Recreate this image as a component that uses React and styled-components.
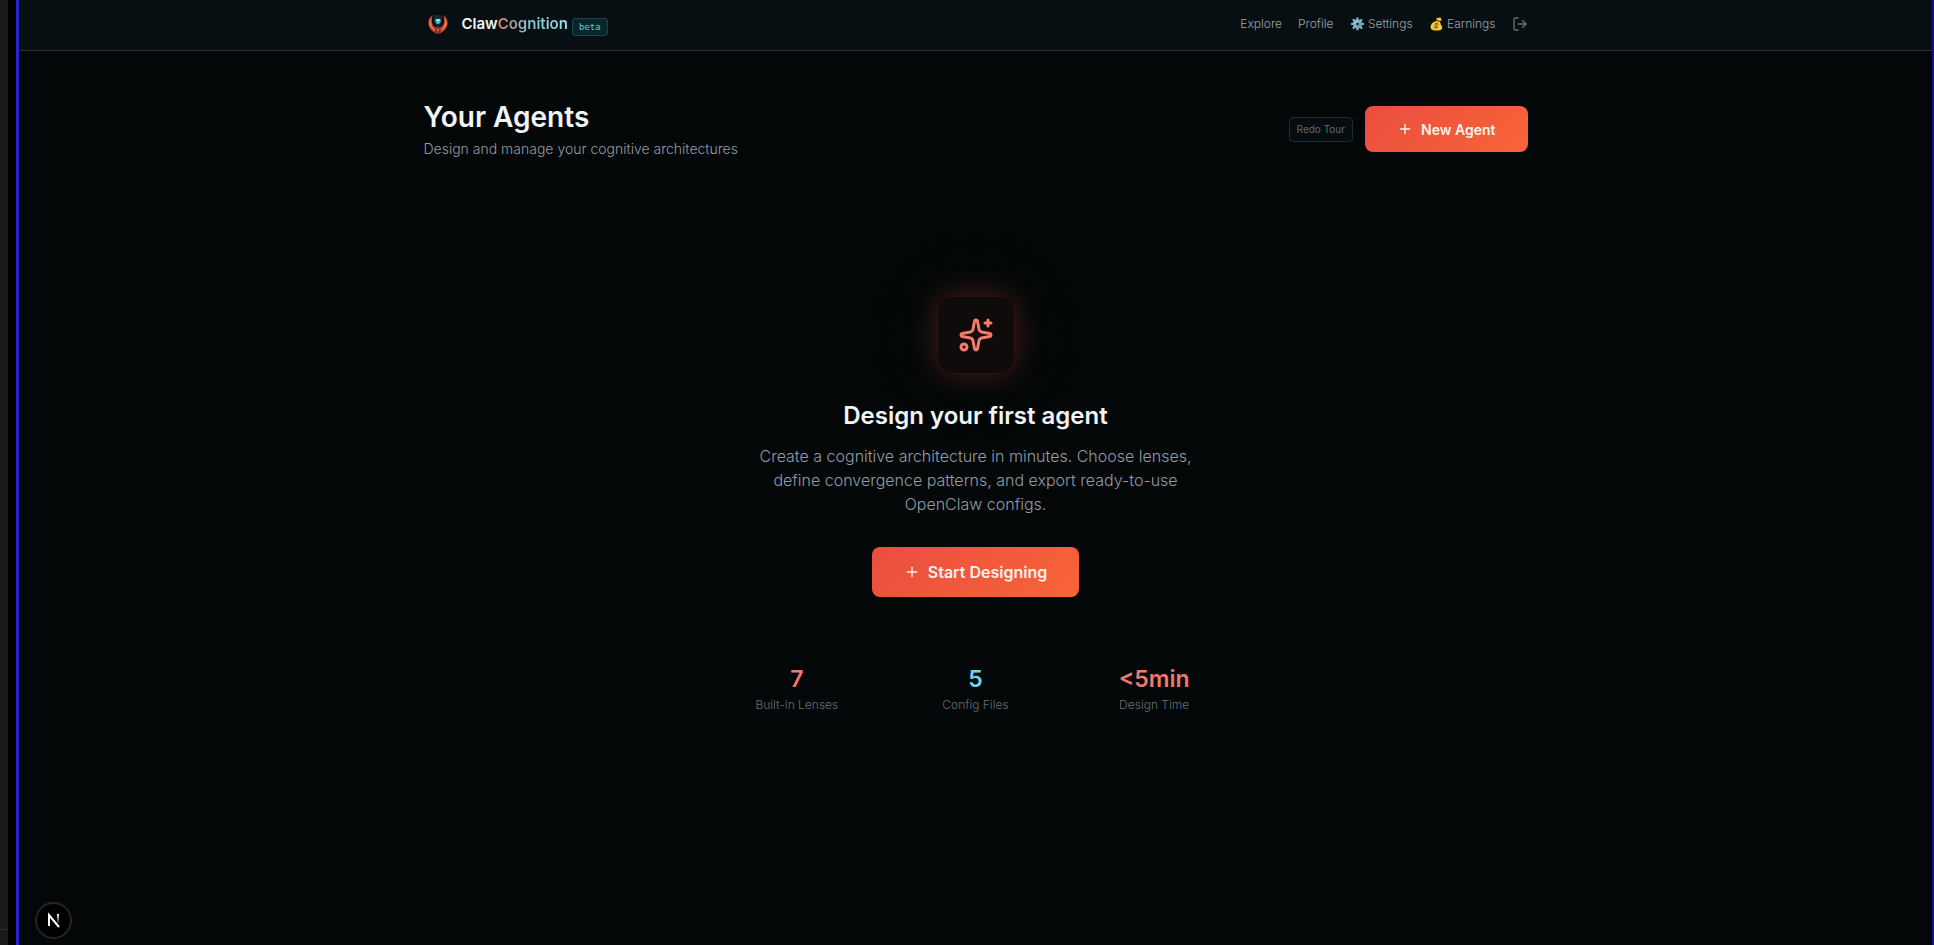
import styled, { createGlobalStyle } from 'styled-components'
import { LogOut, Plus, Sparkles } from 'lucide-react'

const GlobalStyle = createGlobalStyle`
    *{
        box-sizing:border-box;
    }
    body{
        margin:0;
        background-color:#030708;
        color:#f1f5f6;
        font-family:Inter, "Open Sans", sans-serif;
    }
    h1, h2, p, dl, dd{
        margin:0;
    }
`
const Frame = styled.div`
    min-height:100vh;
    display:grid;
    grid-template-columns:8px 1fr;
    column-gap:8px;
    background-color:#000;
`
const Gutter = styled.div`
    background-color:#1a1a1a;
    display:flex;
    flex-direction:column;
    justify-content:flex-end;
`
const GutterFoot = styled.div`
    height:16px;
    border-top:1px solid #2c2c2c;
`
const Page = styled.div`
    background-color:#030708;
    border-left:3px solid #2a22cc;
    border-right:2px solid #16108a;
`
const Header = styled.header`
    height:51px;
    background-color:#080f12;
    border-bottom:1px solid #22343a;
`
const Inner = styled.div`
    max-width:1152px;
    margin:0 auto;
    padding:0 24px;
`
const HeaderRow = styled(Inner)`
    height:48px;
    display:flex;
    align-items:center;
    justify-content:space-between;
`
const Brand = styled.a`
    display:flex;
    align-items:center;
    color:#f1f5f6;
    text-decoration:none;
`
const LogoMark = styled.svg`
    width:28px;
    height:28px;
    margin-right:10px;
`
const BrandName = styled.span`
    font-size:15px;
    line-height:24px;
    font-weight:600;
`
const Gradient = styled.span`
    background:linear-gradient(90deg, #d98078 0%, #7fc3cf 45%, #9ae0ec 100%);
    background-clip:text;
    -webkit-background-clip:text;
    color:transparent;
`
const Beta = styled.span`
    margin-left:4px;
    margin-top:5px;
    padding:0 6px;
    border:1px solid #17464f;
    border-radius:3px;
    background-color:#08252b;
    color:#6cc6d4;
    font-family:"DejaVu Sans Mono", monospace;
    font-size:9px;
    line-height:16px;
`
const Nav = styled.nav`
    display:flex;
    align-items:center;
    gap:16px;
`
const NavLink = styled.a`
    color:#9aa4ac;
    font-size:12px;
    font-weight:300;
    line-height:16px;
    text-decoration:none;
`
const IconButton = styled.button`
    display:flex;
    padding:0;
    border:none;
    background:none;
    color:#66727c;
`
const Main = styled(Inner).attrs({ as: 'main' })`
    padding-top:48px;
`
const TitleRow = styled.div`
    display:flex;
    align-items:center;
    justify-content:space-between;
`
const Title = styled.h1`
    font-size:28px;
    line-height:36px;
    font-weight:600;
    margin-bottom:4px;
`
const Subtitle = styled.p`
    color:#939ca6;
    font-size:14px;
    font-weight:300;
    line-height:20px;
`
const Actions = styled.div`
    display:flex;
    align-items:center;
    gap:12px;
`
const TourButton = styled.button`
    padding:0 7px;
    border:1px solid #1f2c31;
    border-radius:4px;
    background-color:#060d10;
    color:#606a72;
    font-family:inherit;
    font-size:10px;
    line-height:23px;
`
const PrimaryButton = styled.button`
    height:${(props) => (props.$large ? '50px' : '46px')};
    padding:0 32px;
    display:inline-flex;
    align-items:center;
    gap:8px;
    border:none;
    border-radius:8px;
    background:linear-gradient(135deg, #e94e3f, #f96438);
    color:#fdf3ee;
    font-family:inherit;
    font-size:${(props) => (props.$large ? '16px' : '14px')};
    font-weight:600;
`
const Empty = styled.section`
    padding-top:137px;
    display:flex;
    flex-direction:column;
    align-items:center;
    text-align:center;
`
const IconBox = styled.div`
    width:78px;
    height:78px;
    margin-bottom:26px;
    display:flex;
    align-items:center;
    justify-content:center;
    border:1px solid #29120f;
    border-radius:16px;
    background-color:#100b0b;
    color:#f47c6c;
    box-shadow:0 0 30px rgba(232,80,60,0.28), 0 0 80px rgba(110,90,90,0.12);
`
const EmptyTitle = styled.h2`
    font-size:24px;
    line-height:32px;
    font-weight:600;
    margin-bottom:12px;
`
const EmptyText = styled.p`
    max-width:448px;
    margin-bottom:31px;
    color:#939ca6;
    font-size:16px;
    font-weight:300;
    line-height:24px;
`
const Stats = styled.dl`
    width:100%;
    max-width:512px;
    padding-top:66px;
    display:grid;
    grid-template-columns:repeat(3, 1fr);
    gap:24px;
`
const Stat = styled.div`
    display:flex;
    flex-direction:column-reverse;
    gap:2px;
`
const StatValue = styled.dd`
    color:${(props) => props.$color};
    font-size:23px;
    line-height:32px;
    font-weight:600;
`
const StatLabel = styled.dt`
    color:#656f78;
    font-size:12px;
    font-weight:300;
    line-height:16px;
`
const DevBadge = styled.button`
    position:fixed;
    left:35px;
    bottom:6px;
    width:37px;
    height:37px;
    padding:0;
    border:2px solid #242424;
    border-radius:50%;
    background-color:#000;
`

const links = ['Explore', 'Profile', '⚙️ Settings', '💰 Earnings']

const stats = [
    { value: '7', label: 'Built-in Lenses', color: '#ee7a6c' },
    { value: '5', label: 'Config Files', color: '#74d3ec' },
    { value: '<5min', label: 'Design Time', color: '#ee7a6c' },
]

const Logo = () => (
    <LogoMark viewBox="0 0 28 28" aria-hidden="true">
        <path d="M9 5C5 7 3 12 5 16c1 4 5 7 9 8 4-1 8-4 9-8 2-4 0-9-4-11 2 4 2 9-2 12h-6C7 14 7 9 9 5z" fill="#b93c2a" />
        <path d="M8 7c-3 3-4 8-1 11 2 2 4 3 6 4-5-4-7-9-5-15zM20 7c3 3 4 8 1 11-2 2-4 3-6 4 5-4 7-9 5-15z" fill="#ed7449" />
        <path d="M10 6l2-1h4l2 1v6l-3 5h-2l-3-5z" fill="#152a33" />
        <path d="M11 11l1-2h4l1 2-2 3h-2z" fill="#45b9d2" />
        <path d="M12 9h4l-1 2h-2z" fill="#a5e8f1" />
        <path d="M13 17h2l2 4-3 3-3-3z" fill="#7d2622" />
        <path d="M13 20l1-2 1 2-1 2z" fill="#d98a76" />
    </LogoMark>
)

const App = () => {
    return (
        <>
            <GlobalStyle />
            <Frame>
                <Gutter>
                    <GutterFoot />
                </Gutter>
                <Page>
                    <Header>
                        <HeaderRow>
                            <Brand href="#">
                                <Logo />
                                <BrandName>Claw<Gradient>Cognition</Gradient></BrandName>
                                <Beta>beta</Beta>
                            </Brand>
                            <Nav>
                                {links.map((link) => (
                                    <NavLink href="#" key={link}>{link}</NavLink>
                                ))}
                                <IconButton aria-label="Log out">
                                    <LogOut size={16} />
                                </IconButton>
                            </Nav>
                        </HeaderRow>
                    </Header>
                    <Main>
                        <TitleRow>
                            <div>
                                <Title>Your Agents</Title>
                                <Subtitle>Design and manage your cognitive architectures</Subtitle>
                            </div>
                            <Actions>
                                <TourButton>Redo Tour</TourButton>
                                <PrimaryButton>
                                    <Plus size={16} />
                                    New Agent
                                </PrimaryButton>
                            </Actions>
                        </TitleRow>
                        <Empty>
                            <IconBox>
                                <Sparkles size={36} />
                            </IconBox>
                            <EmptyTitle>Design your first agent</EmptyTitle>
                            <EmptyText>
                                Create a cognitive architecture in minutes. Choose lenses, define convergence
                                patterns, and export ready-to-use OpenClaw configs.
                            </EmptyText>
                            <PrimaryButton $large>
                                <Plus size={16} />
                                Start Designing
                            </PrimaryButton>
                            <Stats>
                                {stats.map((stat) => (
                                    <Stat key={stat.label}>
                                        <StatLabel>{stat.label}</StatLabel>
                                        <StatValue $color={stat.color}>{stat.value}</StatValue>
                                    </Stat>
                                ))}
                            </Stats>
                        </Empty>
                    </Main>
                </Page>
            </Frame>
            <DevBadge aria-label="Dev tools">
                <svg width="33" height="33" viewBox="0 0 33 33" fill="none">
                    <defs>
                        <linearGradient id="fade" x1="21" y1="10" x2="21" y2="20" gradientUnits="userSpaceOnUse">
                            <stop stopColor="#fff" />
                            <stop offset="1" stopColor="#fff" stopOpacity="0" />
                        </linearGradient>
                    </defs>
                    <path d="M12 22V11l10 12" stroke="#fff" strokeWidth="2" />
                    <path d="M21 10v10" stroke="url(#fade)" strokeWidth="2" />
                </svg>
            </DevBadge>
        </>
    )
}

export default App
